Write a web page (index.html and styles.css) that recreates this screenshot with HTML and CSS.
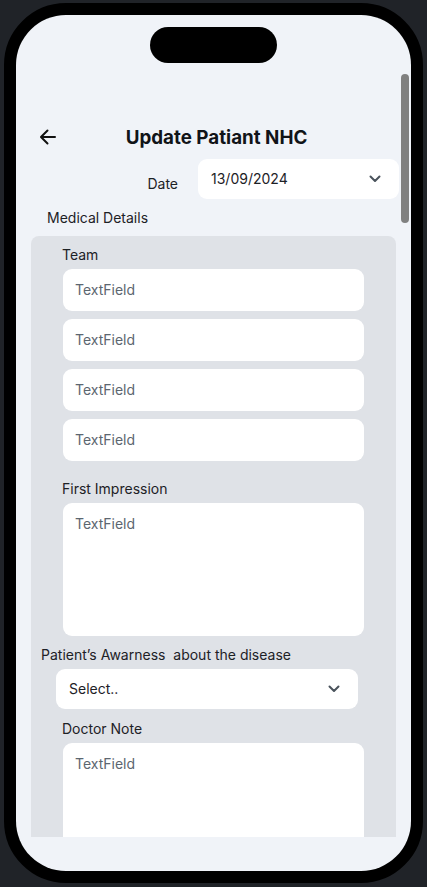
FILE: index.html
```html
<!DOCTYPE html>
<html lang="en">
<head>
<meta charset="utf-8">
<title>Update Patiant NHC</title>
<link rel="stylesheet" href="styles.css">
</head>
<body>
<div class="phone">
  <div class="screen">
    <div class="island"></div>
    <div class="scrollbar"></div>
    <div class="scroll">
      <header class="header">
        <svg class="back" width="18" height="18" viewBox="0 0 18 18" fill="none" stroke="#111" stroke-width="2" stroke-linecap="round" stroke-linejoin="round"><path d="M16 9H2.5M8.5 2.5L2 9l6.5 6.5"/></svg>
        <h1 class="title">Update Patiant NHC</h1>
      </header>
      <div class="date-row">
        <span class="date-label">Date</span>
        <div class="dropdown date-dd">
          <span class="dd-text">13/09/2024</span>
          <svg class="chev" width="12" height="8" viewBox="0 0 12 8" fill="none" stroke="#4a535c" stroke-width="2" stroke-linecap="round" stroke-linejoin="round"><path d="M1.5 1.5L6 6l4.5-4.5"/></svg>
        </div>
      </div>
      <div class="section-title">Medical Details</div>
      <section class="panel">
        <div class="label">Team</div>
        <div class="field">TextField</div>
        <div class="field">TextField</div>
        <div class="field">TextField</div>
        <div class="field">TextField</div>
        <div class="label label-gap">First Impression</div>
        <div class="field area">TextField</div>
        <div class="label label-wide">Patient’s Awarness&nbsp; about the disease</div>
        <div class="dropdown select-dd">
          <span class="dd-text">Select..</span>
          <svg class="chev" width="12" height="8" viewBox="0 0 12 8" fill="none" stroke="#4a535c" stroke-width="2" stroke-linecap="round" stroke-linejoin="round"><path d="M1.5 1.5L6 6l4.5-4.5"/></svg>
        </div>
        <div class="label label-gap2">Doctor Note</div>
        <div class="field area">TextField</div>
      </section>
    </div>
  </div>
</div>
</body>
</html>
```
FILE: styles.css
```css
* { box-sizing: border-box; }
html, body { margin: 0; padding: 0; }
body {
  background: #202328;
  width: 427px;
  height: 887px;
  padding: 3px 4px 4px 4px;
  font-family: Inter, "Noto Sans", sans-serif;
  color: #1d2126;
  overflow: hidden;
}
.phone {
  width: 419px;
  height: 880px;
  border: 12px solid #000;
  border-radius: 62px;
  background: #000;
}
.screen {
  position: relative;
  width: 100%;
  height: 100%;
  background: #f0f3f8;
  border-radius: 50px;
  overflow: hidden;
}
.island {
  position: absolute;
  left: 134px;
  top: 12px;
  width: 127px;
  height: 36px;
  border-radius: 18px;
  background: #000;
  z-index: 2;
}
.scrollbar {
  position: absolute;
  left: 385px;
  top: 59px;
  width: 8px;
  height: 149px;
  border-radius: 4px;
  background: #808080;
  z-index: 2;
}
.scroll {
  height: 822px;
  overflow: hidden;
  padding-top: 108px;
}
.header {
  height: 28px;
  display: flex;
  align-items: center;
  position: relative;
  padding-left: 23px;
}
.back { display: block; }
.title {
  margin: 0;
  flex: 1;
  text-align: center;
  font-size: 18.8px;
  font-weight: 700;
  padding-right: 41px;
  padding-left: 6px;
  padding-top: 2px;
  line-height: 28px;
  color: #111418;
}
.date-row {
  margin-top: 8px;
  display: flex;
  justify-content: flex-end;
  align-items: flex-start;
  gap: 20px;
  padding-right: 12px;
}
.date-label {
  font-size: 14px;
  line-height: 20px;
  margin-top: 15px;
}
.dropdown {
  background: #fff;
  border-radius: 9px;
  height: 40px;
  display: flex;
  align-items: center;
  justify-content: space-between;
  font-size: 14px;
}
.date-dd {
  width: 201px;
  padding: 0 18px 0 13px;
}
.dd-text { line-height: 20px; }
.date-dd .dd-text { margin-top: -1px; }
.section-title {
  font-size: 14px;
  line-height: 20px;
  margin: 9px 0 0 31px;
}
.panel {
  margin: 8px 15px 0 15px;
  background: #dfe2e7;
  border-radius: 8px 8px 0 0;
  padding: 9px 0 40px 0;
  display: flex;
  flex-direction: column;
}
.label {
  font-size: 14px;
  line-height: 20px;
  margin: 0 0 4px 31px;
}
.label-gap { margin-top: 18px; }
.label-wide { margin: 9px 0 4px 10px; }
.label-gap2 { margin-top: 10px; }
.field {
  margin-left: 32px;
  width: 301px;
  height: 42px;
  background: #fff;
  border-radius: 9px;
  padding: 0 12px;
  font-size: 14px;
  line-height: 42px;
  color: #5c6670;
}
.field + .field { margin-top: 8px; }
.field.area {
  height: 133px;
  line-height: 20px;
  padding-top: 11px;
}
.select-dd {
  margin-left: 25px;
  width: 302px;
  padding: 0 18px 0 13px;
}
```
